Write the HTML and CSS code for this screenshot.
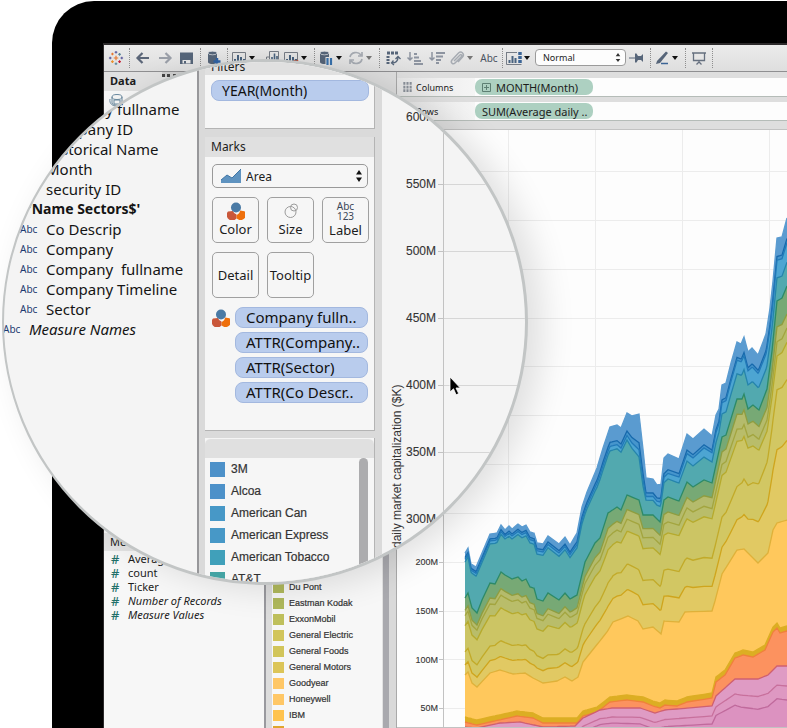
FILE: index.html
```html
<!DOCTYPE html>
<html lang="en">
<head>
<meta charset="utf-8">
<title>Market capitalization</title>
<link rel="stylesheet" href="styles.css">
</head>
<body>
<svg class="defs" aria-hidden="true">
  <defs>
    <symbol id="color" viewBox="0 0 18 18">
      <path d="M1 9.500l5-.5a5 5 0 0 0 3.500 3.500v4A5.500 5.500 0 0 1 1 9.500z" fill="#c9573a"/>
      <path d="M9.500 13a5 5 0 0 0 3.500-4.500l4.500.8a5 5 0 0 1-8 7z" fill="#ee6f0c"/>
      <circle cx="9" cy="5.500" r="5" fill="#4a7aa5"/>
    </symbol>
    <symbol id="chart" viewBox="0 0 18 16">
      <path d="M2.500 13V2.500h13V13M1 13.500h16" fill="none" stroke="#777d86"/>
      <path d="M5 12V9m3 3V5m3 7V7m3 5V9" stroke="#49637f" stroke-width="2"/>
    </symbol>
    <symbol id="db" viewBox="0 0 18 16">
      <path d="M3 3v9c0 2.700 9 2.700 9 0V3" fill="#566579"/>
      <ellipse cx="7.500" cy="3" rx="4.500" ry="1.800" fill="#566579" stroke="#e2e4e6" stroke-width=".7"/>
    </symbol>
    <symbol id="sort" viewBox="0 0 18 16">
      <path d="M4 2v8M1.500 7.500L4 10l2.500-2.500" fill="none" stroke="#8d94a0" stroke-width="1.500"/>
    </symbol>
  </defs>
</svg>

<div class="device">
  <div class="screen">
    <div class="toolbar">
      <button class="tool" aria-label="Start"><svg viewBox="0 0 18 18" fill="none" stroke-width="1.300"><path stroke="#e8762c" d="M9 6.500v5M6.500 9h5M3.500 4.500h3M5 3v3"/><path stroke="#c72035" d="M11.500 13h3M13 11.500v3"/><path stroke="#5b879b" d="M11.500 5h3M13 3.500v3M9 14v3M7.500 15.500h3"/><path stroke="#eb912c" d="M3.500 13h3M5 11.500v3"/><path stroke="#59589b" d="M9 1v3M7.500 2.500h3M14 9h3M15.500 7.500v3M1 9h3M2.500 7.500v3"/></svg></button>
      <i class="sep"></i>
      <button class="tool" aria-label="Back"><svg viewBox="0 0 18 16" fill="none" stroke="#5b6678" stroke-width="2.200"><path d="M15 8H4M8.500 3L3.500 8l5 5"/></svg></button>
      <button class="tool" aria-label="Forward"><svg viewBox="0 0 18 16" fill="none" stroke="#9a9fa8" stroke-width="2.200"><path d="M3 8h11M9.500 3l5 5-5 5"/></svg></button>
      <button class="tool" aria-label="Save"><svg viewBox="0 0 18 16"><path d="M2 2.500h13V14H2z" fill="#566579"/><path d="M4.500 10h8v3.500h-8z" fill="#e8e8e8"/><path d="M6 11h2v2.500H6z" fill="#566579"/></svg></button>
      <i class="sep"></i>
      <button class="tool" aria-label="Add data"><svg viewBox="0 0 18 16"><use href="#db"/><path d="M12 8v7M8.500 11.500h7" stroke="#2f62a4" stroke-width="2.500"/></svg></button>
      <i class="sep"></i>
      <button class="tool drop" aria-label="New sheet"><svg viewBox="0 0 18 16"><use href="#chart"/></svg><i class="arrow"></i></button>
      <button class="tool" aria-label="Duplicate"><svg viewBox="0 0 18 16"><path d="M1 10h3M4.500 11V7H7M7.500 11V1.500h9V11z" fill="none" stroke="#777d86"/><path d="M10 10V7m2.500 3V3.500M15 10V6" stroke="#49637f" stroke-width="1.600"/></svg></button>
      <button class="tool drop" aria-label="Clear"><svg viewBox="0 0 18 16"><use href="#chart"/><path d="M12 10l4 4m0-4l-4 4" stroke="#c9573a" stroke-width="1.500"/></svg><i class="arrow"></i></button>
      <i class="sep"></i>
      <button class="tool drop" aria-label="Pause updates"><svg viewBox="0 0 18 16"><use href="#db"/><path d="M10.500 7v8M14.500 7v8" stroke="#e6e6e6" stroke-width="4"/><path d="M10.500 8v7M14 8v7" stroke="#3972ad" stroke-width="2.200"/></svg><i class="arrow"></i></button>
      <button class="tool drop" aria-label="Refresh"><svg viewBox="0 0 18 16" fill="none" stroke="#a6abb2" stroke-width="1.700"><path d="M3 7c1-5 8-6 11-2M15 2v4h-4M15 9c-1 5-8 6-11 2M3 14v-4h4"/></svg><i class="arrow dim"></i></button>
      <i class="sep"></i>
      <button class="tool" aria-label="Swap"><svg viewBox="0 0 18 16" fill="none"><path d="M3 3h11" stroke="#566579" stroke-width="3" stroke-dasharray="3 1"/><path d="M4 6v8" stroke="#566579" stroke-width="3" stroke-dasharray="2 1"/><path d="M8 13c4 0 6-2 6-6M11.500 9L14 6.500 16.500 9M9.500 10.500L7.500 13l2.500 2" stroke="#566579" stroke-width="1.300"/></svg></button>
      <button class="tool" aria-label="Sort ascending"><svg viewBox="0 0 18 16"><use href="#sort"/><path d="M8 4h3M8 7.500h5M8 11h7M8 14h9" stroke="#8d94a0" stroke-width="2"/></svg></button>
      <button class="tool" aria-label="Sort descending"><svg viewBox="0 0 18 16"><use href="#sort"/><path d="M8 3h9M8 6.500h7M8 10h5M8 13h3" stroke="#8d94a0" stroke-width="2"/></svg></button>
      <button class="tool drop" aria-label="Attach"><svg viewBox="0 0 18 16" fill="none" stroke="#a6abb2" stroke-width="1.500"><path d="M6 11l6-6c1-1 2.500.5 1.500 1.500L7 13c-2 2-5-.5-3-3l6.500-7c3-2.500 6.500 1 4 4L10 12"/></svg><i class="arrow dim"></i></button>
      <button class="tool word">Abc</button>
      <i class="sep"></i>
      <button class="tool drop" aria-label="Show me"><svg viewBox="0 0 18 16"><path d="M1.500 2v12.500h15M1 2.500h11" fill="none" stroke="#777d86"/><path d="M4.500 13v-3m3 3V6m3 7V8" stroke="#49637f" stroke-width="2"/><path d="M15 2v12" stroke="#3c6596" stroke-width="3.500" stroke-dasharray="3 1"/></svg><i class="arrow"></i></button>
      <span class="picker">
        <select aria-label="Fit"><option>Normal</option></select>
        <svg viewBox="0 0 8 12"><path d="M4 1l2.500 3.500h-5zM4 11l2.500-3.500h-5z" fill="#333"/></svg>
      </span>
      <button class="tool" aria-label="Pin"><svg viewBox="0 0 18 16"><path d="M1 8h6" stroke="#566579"/><path d="M7 3.500h1.500L10 6h3l2-2v8l-2-2h-3l-1.500 2.500H7z" fill="#566579"/></svg></button>
      <i class="sep"></i>
      <button class="tool drop" aria-label="Highlight"><svg viewBox="0 0 18 16"><path d="M4 11l9-9.500 2 1.500-8 10-4 1z" fill="#566579"/><path d="M8 13.500h7" stroke="#3c6596" stroke-width="1.500"/></svg><i class="arrow"></i></button>
      <i class="sep"></i>
      <button class="tool" aria-label="Present"><svg viewBox="0 0 18 16" fill="none" stroke="#66707f" stroke-width="1.300"><path d="M2 3h14M3.500 3v7.500h11V3M9 10.500V12M6.500 14.500L9 12l2.500 2.500"/></svg></button>
      <i class="sep"></i>
    </div>

    <div class="workspace">
      <aside class="sidebar">
        <div class="tabs"><h2>Data</h2><span></span></div>
        <svg class="source" viewBox="0 0 16 14" fill="none" stroke="#6b8aa0"><ellipse cx="8" cy="4" rx="5" ry="2.500"/><path d="M3 4v6c0 3 10 3 10 0V4M1 6c-1 5 3 7 6 7M5 7h6v4H5z"/></svg>
        <h3>Measures</h3>
        <ul class="measures">
          <li>Average daily</li>
          <li>count</li>
          <li>Ticker</li>
          <li class="calc">Number of Records</li>
          <li class="own">Measure Values</li>
        </ul>
      </aside>

      <section class="legend-col">
        <ul class="legend small">
          <li><i class="c-olive"></i>Du Pont</li>
          <li><i class="c-olive"></i>Eastman Kodak</li>
          <li><i class="c-moss"></i>ExxonMobil</li>
          <li><i class="c-yellow"></i>General Electric</li>
          <li><i class="c-yellow"></i>General Foods</li>
          <li><i class="c-sand"></i>General Motors</li>
          <li><i class="c-amber"></i>Goodyear</li>
          <li><i class="c-amber"></i>Honeywell</li>
          <li><i class="c-gold"></i>IBM</li>
          <li><i class="c-deep"></i></li>
        </ul>
      </section>

      <main>
        <div class="shelf">
          <span class="shelf-name"><svg viewBox="0 0 10 12"><path d="M1.500 0v12M5 0v12M8.500 0v12" stroke="#8b919a" stroke-width="2.300" stroke-dasharray="3 1"/></svg>Columns</span>
          <span class="green"><svg viewBox="0 0 9 9"><path d="M.5.5h8v8h-8zM2 4.500h5M4.500 2v5" fill="none" stroke="#5d7f73"/></svg>MONTH(Month)</span>
        </div>
        <div class="shelf">
          <span class="shelf-name"><svg viewBox="0 0 10 12"><path d="M0 2h10M0 6h10M0 10h10" stroke="#8b919a" stroke-width="2"/></svg>Rows</span>
          <span class="green">SUM(Average daily ..</span>
        </div>
        <svg class="chart" id="chart-area" viewBox="397 129 390 599">
          <path class="paper" d="M397 129h390v599H397z"/>
          <path class="grid" d="M444 171.500h343M444 220.500h343M444 269.500h343M444 318.500h343M444 366.500h343M444 415.500h343M444 464.500h343M444 513.500h343M444 562.500h343M444 611.500h343M444 659.500h343M444 708.500h343M508.500 129v599M595.500 129v599M682.500 129v599M769.500 129v599"/>
          <g id="areas"></g>
          <path class="axis" d="M443.500 129v599M439 562.500h5M439 611.500h5M439 659.500h5M439 708.500h5M397 727.500h390M397 129.500h390"/>
          <g class="ticks"><text x="438" y="565">200M</text><text x="438" y="614">150M</text><text x="438" y="663">100M</text><text x="438" y="711">50M</text></g>
        </svg>
      </main>
    </div>
  </div>
</div>

<div class="lens">
  <ul class="fields">
    <li>Company fullname</li>
    <li>Company ID</li>
    <li>Historical Name</li>
    <li>Month</li>
    <li>security ID</li>
    <li class="group">'Name Sectors$'</li>
    <li><i>Abc</i>Co Descrip</li>
    <li><i>Abc</i>Company</li>
    <li><i>Abc</i>Company  fullname</li>
    <li><i>Abc</i>Company Timeline</li>
    <li><i>Abc</i>Sector</li>
    <li class="names"><i>Abc</i><em>Measure Names</em></li>
  </ul>

  <div class="cards">
    <section class="card filters">
      <h3>Filters</h3>
      <div class="pill">YEAR(Month)</div>
    </section>
    <section class="card marks">
      <h3>Marks</h3>
      <span class="mark-type">
        <svg class="area-icon" viewBox="0 0 20 14"><path d="M0 14v-3l6-5 5 3 9-9v14z" fill="#5f93c0"/><path d="M0 11l6-5 5 3 9-9" fill="none" stroke="#3f75a5"/></svg>
        <select aria-label="Mark type"><option>Area</option></select>
        <svg class="updown" viewBox="0 0 8 12"><path d="M4 0l3 4.500H1zM4 12l3-4.500H1z" fill="#111"/></svg>
      </span>
      <div class="mark-buttons">
        <button><svg viewBox="0 0 18 18"><use href="#color"/></svg>Color</button>
        <button><svg viewBox="0 0 18 18" fill="none" stroke="#9b9b9b"><circle cx="8.500" cy="10" r="5.500"/><circle cx="12" cy="5.500" r="3.500"/></svg>Size</button>
        <button><small>Abc<br>123</small>Label</button>
        <button>Detail</button>
        <button>Tooltip</button>
      </div>
      <div class="encodings">
        <svg viewBox="0 0 18 18"><use href="#color"/></svg>
        <div class="pills">
          <div class="pill">Company fulln..</div>
          <div class="pill">ATTR(Company..</div>
          <div class="pill">ATTR(Sector)</div>
          <div class="pill">ATTR(Co Descr..</div>
        </div>
      </div>
    </section>
    <section class="card colors">
      <h3></h3>
      <div class="scroll">
        <ul class="legend">
          <li><i class="c-blue"></i>3M</li>
          <li><i class="c-blue"></i>Alcoa</li>
          <li><i class="c-sky"></i>American Can</li>
          <li><i class="c-sky"></i>American Express</li>
          <li><i class="c-aqua"></i>American Tobacco</li>
          <li><i class="c-teal"></i>AT&amp;T</li>
        </ul>
        <i class="thumb"></i>
      </div>
    </section>
  </div>

  <svg class="lens-chart" viewBox="382 62 143 523">
    <path class="grid" d="M444 184.500h90M444 251.500h90M444 318.500h90M444 385.500h90M444 452.500h90"/>
    <path class="axis" d="M443.500 110v420M438 184.500h6M438 251.500h6M438 318.500h6M438 385.500h6M438 452.500h6M438 519.500h6"/>
    <g class="ticks"><text x="436" y="121">600M</text><text x="436" y="188">550M</text><text x="436" y="255">500M</text><text x="436" y="322">450M</text><text x="436" y="389">400M</text><text x="436" y="456">350M</text><text x="436" y="523">300M</text></g>
    <text class="axis-title" transform="translate(401 548) rotate(-90)">daily market capitalization ($K)</text>
    <path d="M450 377v15l3.500-3.200 2.600 6 2.600-1.200-2.700-5.600h4.300z" fill="#000" stroke="#fff" stroke-width=".8"/>
  </svg>
</div>
<script src="chart.js"></script>
</body>
</html>
```
FILE: styles.css
```css
* { box-sizing: border-box; }
body {
  margin: 0;
  position: relative;
  overflow: hidden;
  background: #fff;
  color: #1c1c1c;
  font-family: "Noto Sans", "Open Sans", sans-serif;
  font-size: 11px;
}
ul, h2, h3 { margin: 0; padding: 0; list-style: none; font-size: inherit; }
button, select { font: inherit; color: inherit; margin: 0; padding: 0; border: 0; background: none; }
select { appearance: none; }
.defs { position: absolute; width: 0; height: 0; }

.device {
  margin: 1px 0 0 52px;
  padding: 42px 0 0 51px;
  background: #000;
  border-top-left-radius: 42px;
}
.screen { border: solid #2c2a2b; border-width: 2px 0 0 1px; background: #e2e2e2; }

.toolbar {
  display: flex;
  align-items: center;
  height: 27px;
  padding: 0 0 1px 1px;
  background: linear-gradient(#ebebeb, #dedede);
  border-bottom: 1px solid #8f8f91;
}
.tool { display: flex; flex: none; align-items: center; justify-content: center; width: 22px; height: 24px; }
.tool svg { width: 18px; height: 16px; flex: none; }
.drop { width: 30px; gap: 1px; justify-content: flex-start; }
.word { font-size: 10px; color: #4a5260; }
.arrow { border: solid transparent; border-width: 4px 3px 0; border-top-color: #111; }
.arrow.dim { border-top-color: #777; }
.sep { flex: none; height: 20px; margin: 0 2px; border-left: 1px dotted #8e8e8e; }
.picker { position: relative; flex: none; width: 91px; }
.picker select {
  display: block;
  width: 100%;
  height: 17px;
  padding-left: 7px;
  background: #fdfdfd;
  border: 1px solid #9b9b9b;
  border-radius: 4px;
  font-size: 9px;
}
.picker svg { position: absolute; right: 4px; top: 3px; width: 8px; height: 11px; pointer-events: none; }

.workspace { display: grid; grid-template-columns: 160px 132px 1fr; }
.sidebar { background: #f7f7f7; }
.tabs { display: grid; grid-template-columns: 58px 1fr; height: 19px; background: #e1e1e1; }
.tabs h2 { padding-left: 6px; font-size: 11px; line-height: 18px; }
.tabs span { background: #cecece; border-bottom: 3px dotted #444; height: 5px; width: 32px; }
.source { display: block; width: 16px; height: 14px; margin: 2px 5px; }
.sidebar h3 { margin-top: 426px; padding-left: 6px; line-height: 18px; font-weight: 400; background: #e4e4e4; }
.measures { padding-top: 1px; }
.measures li { display: flex; line-height: 14px; padding-left: 7px; }
.measures li::before { content: "#"; width: 17px; color: #1f7069; font-weight: 500; font-size: 13px; font-style: normal; }
.measures .calc, .measures .own { font-style: italic; }

.legend-col {
  padding-top: 507px;
  border-left: 2px solid #99999e;
  background:
    linear-gradient(#dedede, #dedede) 0 0 / 100% 100px no-repeat,
    linear-gradient(90deg, #dcdcdc 6px, #f7f7f7 6px 116px, #e2e2e2 116px 117px, #a9a9ae 117px 123px, #d9d9d9 123px);
}
.legend { font-family: "Liberation Sans", Arial, sans-serif; color: #333; -webkit-text-stroke: 0.2px #333; }
.legend li { display: flex; align-items: center; gap: 6px; height: 22px; white-space: nowrap; font-size: 12px; }
.legend i { width: 15px; height: 15px; }
.legend.small { padding-left: 7px; max-height: 149px; overflow: hidden; }
.legend.small li { height: 16px; gap: 5px; font-size: 9px; }
.legend.small i { width: 11px; height: 11px; }
.c-blue { background: #4d91c9; }
.c-sky { background: #4798c7; }
.c-aqua { background: #40a0ba; }
.c-teal { background: #43a3a3; }
.c-olive { background: #b0b95c; }
.c-moss { background: #bfc05d; }
.c-yellow { background: #d2c55a; }
.c-sand { background: #dcc558; }
.c-amber { background: #ffc766; }
.c-gold { background: #ffc34e; }
.c-deep { background: #e0a62e; }

main { padding-top: 6px; background: #dedede; border-left: 1px solid #a9a9a9; }
.shelf {
  display: flex;
  align-items: center;
  height: 19px;
  margin-bottom: 5px;
  background: #fdfdfd;
  border-bottom: 1px solid #b5bcb8;
}
.shelf-name { display: flex; align-items: center; gap: 4px; width: 78px; height: 18px; padding-left: 6px; background: linear-gradient(90deg, #e6e6e6, #f5f5f5); font-size: 9px; }
.shelf-name svg { width: 9px; height: 11px; }
.green { display: flex; align-items: center; gap: 5px; width: 118px; height: 16px; padding-left: 7px; border-radius: 7px; background: #add0c1; white-space: nowrap; }
.green svg { width: 9px; height: 9px; }
.chart { display: block; width: 100%; margin-top: 8px; font: 9px "Liberation Sans", Arial, sans-serif; }
.paper { fill: #fdfdfd; }
.grid { fill: none; stroke: #ececec; }
.axis { fill: none; stroke: #c2c2c2; }
.ticks { text-anchor: end; fill: #333; stroke: #333; stroke-width: 0.1px; }

.lens {
  position: absolute;
  left: 2px;
  top: 59px;
  display: grid;
  grid-template-columns: 192px 185px 1fr;
  width: 526px;
  height: 526px;
  overflow: hidden;
  border: 3px solid #c2c5c5;
  border-left-width: 2px;
  padding-left: 1px;
  border-radius: 50%;
  background: #f4f4f4;
  box-shadow: 14px 4px 34px rgba(0, 0, 0, 0.12);
}
.fields { padding-top: 37px; font-size: 15px; line-height: 20px; color: #141414; }
.fields li { display: flex; padding-left: 41px; white-space: pre; }
.fields li:has(i) { padding-left: 15px; }
.fields i { width: 26px; font-size: 10px; font-style: normal; color: #1d3b70; }
.fields .group { padding-left: 23px; font-size: 14px; font-weight: 700; }
.fields li.names { padding-left: 0; }
.names i { margin-left: -2px; }

.cards { padding: 0 7px 0 6px; border-left: 2px solid #97979a; background: #dadada; overflow: hidden; }
.card { margin-bottom: 8px; background: #f6f6f6; border: solid #b4b4b4; border-width: 0 1px 1px 0; }
.card h3 { height: 20px; padding-left: 6px; line-height: 20px; font-size: 12px; font-weight: 400; background: #e0e0e0; }
.card.filters { height: 67px; }
.filters h3 { height: 13px; line-height: 9px; }
.filters .pill { margin: 5px 5px 0 6px; }
.pill {
  height: 21px;
  padding-left: 10px;
  border: 1px solid #a3b8df;
  border-radius: 8px;
  background: #b9cced;
  font-size: 15px;
  line-height: 19px;
  white-space: nowrap;
  color: #111;
}
.filters .pill { font-size: 14px; }
.card.marks { height: 294px; margin-bottom: 7px; }
.mark-type { position: relative; display: block; margin: 7px 6px 9px 7px; }
.mark-type select {
  display: block;
  width: 100%;
  height: 24px;
  padding-left: 33px;
  border: 1px solid #999;
  border-radius: 5px;
  font-size: 12px;
}
.area-icon { position: absolute; left: 9px; top: 5px; width: 20px; height: 14px; }
.updown { position: absolute; right: 5px; top: 6px; width: 8px; height: 12px; }
.mark-buttons { display: grid; grid-template-columns: repeat(3, 47px); gap: 9px 8px; padding-left: 7px; }
.mark-buttons button {
  display: flex;
  flex-direction: column;
  align-items: center;
  justify-content: center;
  height: 46px;
  border: 1px solid #a0a0a0;
  border-radius: 5px;
  font-size: 13px;
  line-height: 18px;
}
.mark-buttons svg { width: 18px; height: 18px; }
.mark-buttons small { font-size: 10px; line-height: 10px; color: #3b4656; }
.encodings { display: flex; gap: 5px; padding: 9px 6px 0 7px; }
.encodings svg { width: 18px; height: 18px; margin-top: 2px; }
.pills { display: grid; flex: 1; gap: 4px; }
.colors { height: 200px; }
.colors h3 { border-radius: 6px 6px 0 0; border-top: 1px solid #f4f4f4; }
.scroll { display: flex; justify-content: space-between; padding: 0 6px 0 5px; }
.thumb { width: 9px; height: 150px; border-radius: 5px; background: #acacae; }
.lens-chart { width: 100%; font: 12px "Liberation Sans", Arial, sans-serif; }
.lens-chart .grid { stroke: #d6d6d6; }
.axis-title { font-size: 12px; fill: #333; }
```
FILE: chart.js
```js
// Measured outlines of the stack, as x,y pairs in chart units.
const parse = s => s.split(' ').map(p => p.split(',').map(Number));
const top_ = parse('465,553 468,548 471,564 476,567 482,553 490,534 497,533 501,525 505,530 509,526 512,529 518,524 522,527 526,525 530,532 534,533 537,543 543,544 548,536 559,544 565,537 570,545 577,533 582,507 587,492 597,468 603,448 610,427 617,425 621,428 627,413 632,416 639,414 643,449 646,478 653,479 657,485 661,484 664,458 668,454 679,459 687,434 693,439 704,429 712,436 716,415 719,409 722,385 726,383 731,363 737,342 741,344 744,337 748,352 752,348 758,355 766,334 770,308 773,281 777,238 782,237 787,218');
const green = parse('465,598 468,593 472,608 477,613 482,600 490,583 495,584 501,572 505,575 512,579 518,577 522,581 526,579 530,587 534,588 537,599 543,601 548,593 559,600 565,593 570,599 577,595 585,562 595,543 600,538 608,513 617,507 621,510 627,495 639,500 643,515 653,515 660,522 664,500 668,497 679,501 687,482 693,487 704,480 712,483 722,437 726,435 737,399 742,399 744,394 748,409 753,405 759,410 767,389 772,351 777,301 782,298 787,286');
const amber = parse('465,675 468,672 472,683 477,687 490,673 500,670 513,674 525,673 533,678 543,683 557,681 565,677 572,681 578,677 583,662 595,647 607,632 613,622 628,616 638,621 643,629 653,627 661,634 664,621 679,622 685,612 712,611 715,601 722,574 737,550 744,549 758,563 768,553 773,530 777,523 787,520');
const gold = parse('465,717 477,720 490,717 517,711 533,713 543,718 577,718 583,711 597,707 610,697 627,695 643,697 653,701 660,703 665,700 677,701 687,697 712,693 716,677 725,670 735,653 743,650 753,652 765,645 773,627 777,623 780,628 787,626');
const pink = parse('465,727 477,728 500,723 520,722 543,727 575,726 583,718 600,710 612,708 640,708 655,713 665,710 712,706 716,696 735,679 758,679 768,675 777,666 787,666');

const at = (line, x) => {
  for (let i = 1; i < line.length; i++) {
    const [x0, y0] = line[i - 1], [x1, y1] = line[i];
    if (x <= x1) return y0 + (y1 - y0) * (x - x0) / (x1 - x0);
  }
  return line[line.length - 1][1];
};
const mix = (a, b, shares) => {
  const f = parse(shares);
  return x => at(a, x) + (at(b, x) - at(a, x)) * at(f, x);
};
const line = l => x => at(l, x);
const shift = (l, offsets) => { const o = parse(offsets); return x => at(l, x) + at(o, x); };

const layers = [
  [line(top_), '#5a9bd0', '#5a9bd0'],
  [mix(top_, green, '465,.1 543,.1 625,.2 646,.4 704,.31 737,.27 787,.3'), '#4695cc', '#1769ac'],
  [mix(top_, green, '465,.14 543,.14 625,.25 646,.5 704,.37 737,.32 787,.36'), '#4da5d2', '#2279b8'],
  [mix(top_, green, '465,.2 543,.2 625,.3 646,.6 704,.55 737,.56 787,.65'), '#52a9af', '#2584ac'],
  [line(green), '#77a975', '#2d8a68'],
  [mix(green, amber, '465,.16 543,.18 625,.12 704,.12 737,.1 787,.12'), '#b5bb6c', '#8f9d40'],
  [mix(green, amber, '465,.23 543,.24 625,.2 704,.2 737,.2 787,.18'), '#b9bd6a', '#a3a53f'],
  [mix(green, amber, '465,.36 543,.37 625,.3 704,.28 737,.28 787,.24'), '#ccc564', '#b6aa2d'],
  [mix(green, amber, '465,.7 543,.7 625,.57 704,.59 737,.58 777,.4 787,.4'), '#d2c763', '#c2aa29'],
  [mix(green, amber, '465,.87 543,.85 625,.78 704,.81 737,.8 777,.67 787,.66'), '#e1c963', '#cfa51d'],
  [line(amber), '#ffc85c', '#dfb13a'],
  [line(gold), '#dcae23', '#dcae23'],
  [shift(gold, '465,5 787,5'), '#fc925f', '#f0803c'],
  [line(pink), '#df9bc4', '#cf6070'],
  [shift(pink, '465,5 610,9 712,10 740,16 787,20'), '#de98c2', '#c8709c'],
  [shift(pink, '465,9 610,15 712,18 740,28 787,34'), '#dc92c0', '#c06a9c']
];

const xs = [...new Set([top_, green, amber, gold, pink].flat().map(p => p[0]))].sort((a, b) => a - b);
const host = document.getElementById('areas');
for (const [y, fill, stroke] of layers) {
  const pts = xs.map(x => `${x} ${y(x).toFixed(1)}`).join('L');
  for (const [d, attrs] of [[`M465 728L${pts}L787 728z`, { fill }], [`M${pts}`, { fill: 'none', stroke, 'stroke-width': 1.3 }]]) {
    const path = document.createElementNS('http://www.w3.org/2000/svg', 'path');
    path.setAttribute('d', d);
    for (const k in attrs) path.setAttribute(k, attrs[k]);
    host.append(path);
  }
}
```
